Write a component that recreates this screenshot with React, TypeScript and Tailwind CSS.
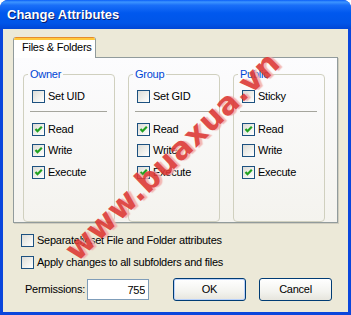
import { ReactNode } from 'react'

interface CheckProps {
  label: string
  checked?: boolean
}

function Check({ label, checked = false }: CheckProps) {
  return (
    <label className="flex items-center h-[13px] gap-[3px] leading-[13px]">
      <span className="relative w-[13px] h-[13px] shrink-0 border border-[#1c5180] bg-[linear-gradient(135deg,#dcdcd7_0%,#f0f0ec_55%,#ffffff_100%)]">
        {checked && (
          <svg width="11" height="11" viewBox="0 0 11 11" className="absolute left-0 top-0">
            <path d="M2.5 5 L4.5 7.2 L8.8 2.8" fill="none" stroke="#21a121" strokeWidth="2.2" />
          </svg>
        )}
      </span>
      <span>{label}</span>
    </label>
  )
}

interface GroupProps {
  title: string
  special: string
  read: boolean
  write: boolean
  execute: boolean
  children?: ReactNode
}

function Group({ title, special, read, write, execute }: GroupProps) {
  return (
    <fieldset className="w-[92px] border border-[#d0d0bf] rounded-[4px] pl-[8px] pr-[7px] pt-[9px] pb-[8px] m-0">
      <legend className="-ml-[4px] px-[2px] leading-[13px] text-[#0046d5]">{title}</legend>
      <Check label={special} />
      <div className="mt-[8px] -ml-[2px] w-[77px] h-px bg-[#a5a59d]" />
      <div className="mt-[11px] flex flex-col gap-[8px]">
        <Check label="Read" checked={read} />
        <Check label="Write" checked={write} />
        <div className="mt-[1px]">
          <Check label="Execute" checked={execute} />
        </div>
      </div>
    </fieldset>
  )
}

export default function App() {
  return (
    <div className="relative w-[351px] h-[315px] overflow-hidden bg-white font-['Liberation_Sans',Arial,sans-serif] text-[11px] tracking-[-0.25px] text-black">
      <div className="flex flex-col h-full rounded-t-[8px] bg-[#0a46dc]">
        {/* title bar */}
        <div className="h-[29px] shrink-0 flex items-center pl-[7px] rounded-t-[8px] bg-[linear-gradient(to_bottom,#0a5ef8_0%,#3d95ff_7%,#1a6ff8_18%,#0058ee_45%,#0055e8_80%,#0046d6_100%)]">
          <span className="text-white font-bold text-[13px] tracking-normal [text-shadow:1px_1px_0_#0a1c6a]">
            Change Attributes
          </span>
        </div>

        <div className="flex-1 mx-[3px] mb-[3px] bg-[#ece9d8] flex flex-col">
          {/* tabs */}
          <div className="pt-[8px] pl-[10px] pr-[10px]">
            <div className="relative z-10 -mb-px w-[83px] h-[21px] bg-white border-x border-[#919b9c] rounded-t-[3px] overflow-hidden">
              <div className="h-[1px] bg-[#e68b2c]" />
              <div className="h-[2px] bg-[#ffc83c]" />
              <div className="pl-[8px] leading-[15px]">Files &amp; Folders</div>
            </div>
            <div className="h-[166px] border border-[#919b9c] bg-[linear-gradient(to_bottom,#fcfcfe,#f4f3ee)] shadow-[1px_1px_0_#d0cdbf] pt-[10px] pl-[9px] flex gap-[13px]">
              <Group title="Owner" special="Set UID" read write execute />
              <Group title="Group" special="Set GID" read write={false} execute />
              <Group title="Public" special="Sticky" read write={false} execute />
            </div>
          </div>

          {/* options */}
          <div className="mt-[11px] pl-[18px] flex flex-col gap-[9px]">
            <Check label="Separately set File and Folder attributes" />
            <Check label="Apply changes to all subfolders and files" />
          </div>

          {/* bottom row */}
          <div className="mt-[9px] h-[23px] flex items-center pl-[22px]">
            <span className="w-[62px]">Permissions:</span>
            <input
              readOnly
              value="755"
              className="w-[62px] h-[21px] border border-[#7f9db9] bg-white text-right pr-[3px] outline-none"
            />
            <button className="ml-[24px] w-[73px] h-[23px] rounded-[3px] border border-[#003c74] bg-[linear-gradient(to_bottom,#ffffff,#f3f3ef_60%,#e6e5dd)] shadow-[inset_0_0_0_1px_#b9d1fa]">
              OK
            </button>
            <button className="ml-[13px] w-[73px] h-[23px] rounded-[3px] border border-[#003c74] bg-[linear-gradient(to_bottom,#ffffff,#f3f3ef_60%,#e6e5dd)]">
              Cancel
            </button>
          </div>
        </div>
      </div>

      {/* watermark */}
      <span className="absolute left-[172px] top-[156px] -translate-x-1/2 -translate-y-1/2 rotate-[-44deg] whitespace-nowrap font-['DejaVu_Sans',sans-serif] font-bold text-[31px] tracking-[0.5px] text-[#dd3a36] opacity-90 [text-shadow:2px_2px_1px_#f3b1ad] pointer-events-none">
        www.buaxua.vn
      </span>
    </div>
  )
}
